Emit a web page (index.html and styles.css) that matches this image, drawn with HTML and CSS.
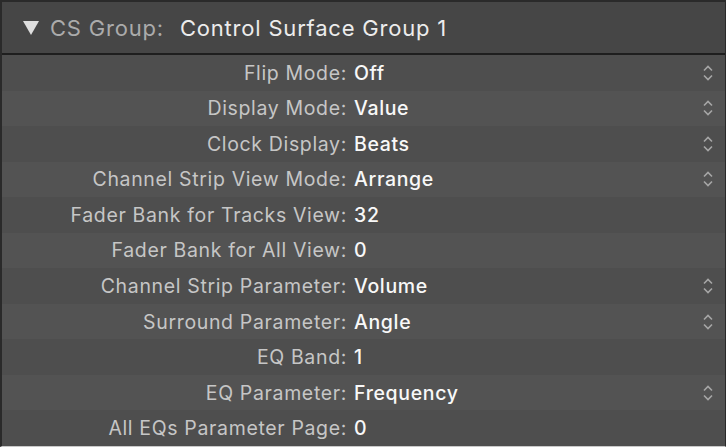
FILE: index.html
```html
<!DOCTYPE html>
<html lang="en">
<head>
    <meta charset="UTF-8">
    <title>CS Group Inspector</title>
    <link rel="stylesheet" href="styles.css">
</head>
<body>
    <div class="panel">
        <div class="header">
            <svg class="disclosure" viewBox="0 0 16 14"><path d="M0 0H16L8 14Z"/></svg>
            <span class="group-label">CS Group:</span>
            <span class="group-name">Control Surface Group 1</span>
        </div>
        <div class="rows">
            <div class="row"><span class="label">Flip Mode:</span><span class="value">Off</span><svg class="stepper" viewBox="0 0 10 16"><path d="M1 5.5L5 1.5L9 5.5M1 10.5L5 14.5L9 10.5"/></svg></div>
            <div class="row"><span class="label">Display Mode:</span><span class="value">Value</span><svg class="stepper" viewBox="0 0 10 16"><path d="M1 5.5L5 1.5L9 5.5M1 10.5L5 14.5L9 10.5"/></svg></div>
            <div class="row"><span class="label">Clock Display:</span><span class="value">Beats</span><svg class="stepper" viewBox="0 0 10 16"><path d="M1 5.5L5 1.5L9 5.5M1 10.5L5 14.5L9 10.5"/></svg></div>
            <div class="row"><span class="label">Channel Strip View Mode:</span><span class="value">Arrange</span><svg class="stepper" viewBox="0 0 10 16"><path d="M1 5.5L5 1.5L9 5.5M1 10.5L5 14.5L9 10.5"/></svg></div>
            <div class="row"><span class="label">Fader Bank for Tracks View:</span><span class="value">32</span></div>
            <div class="row"><span class="label">Fader Bank for All View:</span><span class="value">0</span></div>
            <div class="row"><span class="label">Channel Strip Parameter:</span><span class="value">Volume</span><svg class="stepper" viewBox="0 0 10 16"><path d="M1 5.5L5 1.5L9 5.5M1 10.5L5 14.5L9 10.5"/></svg></div>
            <div class="row"><span class="label">Surround Parameter:</span><span class="value">Angle</span><svg class="stepper" viewBox="0 0 10 16"><path d="M1 5.5L5 1.5L9 5.5M1 10.5L5 14.5L9 10.5"/></svg></div>
            <div class="row"><span class="label">EQ Band:</span><span class="value">1</span></div>
            <div class="row"><span class="label">EQ Parameter:</span><span class="value">Frequency</span><svg class="stepper" viewBox="0 0 10 16"><path d="M1 5.5L5 1.5L9 5.5M1 10.5L5 14.5L9 10.5"/></svg></div>
            <div class="row"><span class="label">All EQs Parameter Page:</span><span class="value">0</span></div>
        </div>
    </div>
</body>
</html>
```
FILE: styles.css
```css
body {
    margin: 0;
    background: #2a2a2a;
    font-family: Inter, "Liberation Sans", sans-serif;
}
.panel {
    width: 726px;
    height: 447px;
    box-sizing: border-box;
    border-top: 2px solid #2a2a2a;
    border-left: 2px solid #2a2a2a;
    border-right: 1px solid #2a2a2a;
    border-bottom: 1px solid #c9c9c9;
    display: flex;
    flex-direction: column;
}
.header {
    height: 51px;
    flex: none;
    display: flex;
    align-items: center;
    background: #464646;
    border-bottom: 2px solid #1e1e1e;
    font-size: 22px;
    letter-spacing: 0.8px;
}
.disclosure {
    width: 16px;
    height: 14px;
    margin-left: 21px;
    margin-right: 11px;
    fill: #dedede;
}
.group-label {
    color: #ababab;
}
.group-name {
    color: #ececec;
    margin-left: 16px;
}
.rows {
    flex: 1;
    display: grid;
    grid-template-rows: repeat(11, 1fr);
    font-size: 19.5px;
    letter-spacing: 0.65px;
}
.row {
    display: flex;
    align-items: center;
    background: #4e4e4e;
}
.row:nth-child(even) {
    background: #535353;
}
.label {
    width: 345px;
    text-align: right;
    color: #c6c6c6;
}
.value {
    margin-left: 7px;
    color: #f8f8f8;
    font-weight: 500;
}
.stepper {
    width: 10px;
    height: 16px;
    margin-left: auto;
    margin-right: 12px;
    fill: none;
    stroke: #a6a6a6;
    stroke-width: 1.6;
}
```
